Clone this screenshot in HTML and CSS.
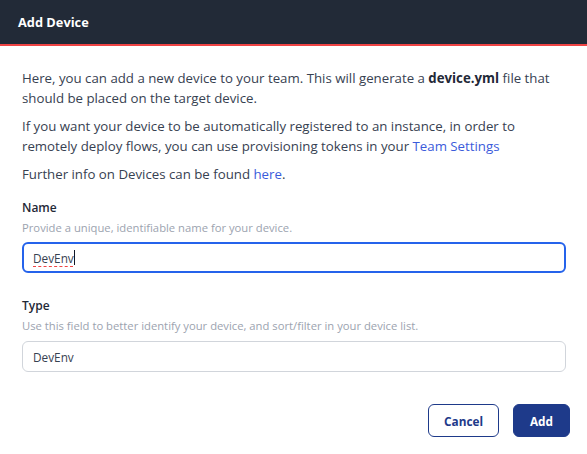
FILE: index.html
```html
<!DOCTYPE html>
<html lang="en">
<head>
<meta charset="utf-8">
<title>Add Device</title>
<link rel="stylesheet" href="styles.css">
</head>
<body>
<div class="dialog">
  <header class="dialog-header">
    <h1 class="dialog-title">Add Device</h1>
  </header>
  <main class="dialog-body">
    <p class="text">Here, you can add a new device to your team. This will generate a <b>device.yml</b> file that should be placed on the target device.</p>
    <p class="text">If you want your device to be automatically registered to an instance, in order to remotely deploy flows, you can use provisioning tokens in your <a class="link" href="#">Team Settings</a></p>
    <p class="text">Further info on Devices can be found <a class="link" href="#">here</a>.</p>
    <div class="field field-name">
      <label class="label">Name</label>
      <div class="help">Provide a unique, identifiable name for your device.</div>
      <div class="input input-focus"><span class="misspelled">DevEnv</span><span class="caret"></span></div>
    </div>
    <div class="field field-type">
      <label class="label">Type</label>
      <div class="help">Use this field to better identify your device, and sort/filter in your device list.</div>
      <div class="input">DevEnv</div>
    </div>
  </main>
  <footer class="dialog-footer">
    <button class="btn btn-secondary">Cancel</button>
    <button class="btn btn-primary">Add</button>
  </footer>
</div>
</body>
</html>
```
FILE: styles.css
```css
html, body {
  margin: 0;
  padding: 0;
  background: #ffffff;
}
body {
  font-family: "Open Sans", "Noto Sans", sans-serif;
  color: #374151;
}
.dialog {
  width: 587px;
  height: 454px;
  display: flex;
  flex-direction: column;
}
.dialog-header {
  height: 44px;
  background: #222a37;
  border-bottom: 2px solid #ef4444;
  display: flex;
  align-items: center;
  padding-left: 18px;
}
.dialog-title {
  margin: 0;
  font-size: 12.8px;
  font-weight: 700;
  color: #ffffff;
}
.dialog-body {
  padding: 22px 21px 0 22px;
}
.text {
  margin: 0 0 8px 0;
  font-size: 13.25px;
  line-height: 20px;
  color: #374151;
}
.text b {
  color: #1f2937;
}
.link {
  color: #3b5bdb;
  text-decoration: none;
}
.field {
  display: flex;
  flex-direction: column;
}
.field-name {
  margin-top: 15px;
}
.field-type {
  margin-top: 24px;
}
.label {
  font-size: 12px;
  font-weight: 600;
  color: #1f2937;
  line-height: 18px;
}
.help {
  font-size: 11.25px;
  color: #9ca3af;
  line-height: 18px;
  margin-top: 2px;
}
.input {
  margin-top: 6px;
  height: 29px;
  border: 1px solid #d1d5db;
  border-radius: 6px;
  display: flex;
  align-items: center;
  padding-left: 10px;
  font-size: 11.8px;
  color: #374151;
}
.input-focus {
  height: 27px;
  border: 2px solid #2563eb;
  padding-left: 9px;
  margin-top: 5px;
}
.misspelled {
  text-decoration: underline dashed #ef4444;
  text-decoration-thickness: 1px;
  text-underline-offset: 3px;
}
.caret {
  display: inline-block;
  width: 1px;
  height: 15px;
  background: #111827;
}
.dialog-footer {
  margin-top: auto;
  display: flex;
  justify-content: flex-end;
  gap: 14px;
  padding: 0 17px 17px 0;
}
.btn {
  height: 33px;
  border-radius: 6px;
  font-family: "Open Sans", "Noto Sans", sans-serif;
  font-size: 11.8px;
  font-weight: 700;
  cursor: pointer;
}
.btn-secondary {
  width: 71px;
  background: #ffffff;
  border: 1px solid #1e3a8a;
  color: #1e3a8a;
}
.btn-primary {
  width: 57px;
  background: #1e3a8a;
  border: 1px solid #1e3a8a;
  color: #ffffff;
}
```
